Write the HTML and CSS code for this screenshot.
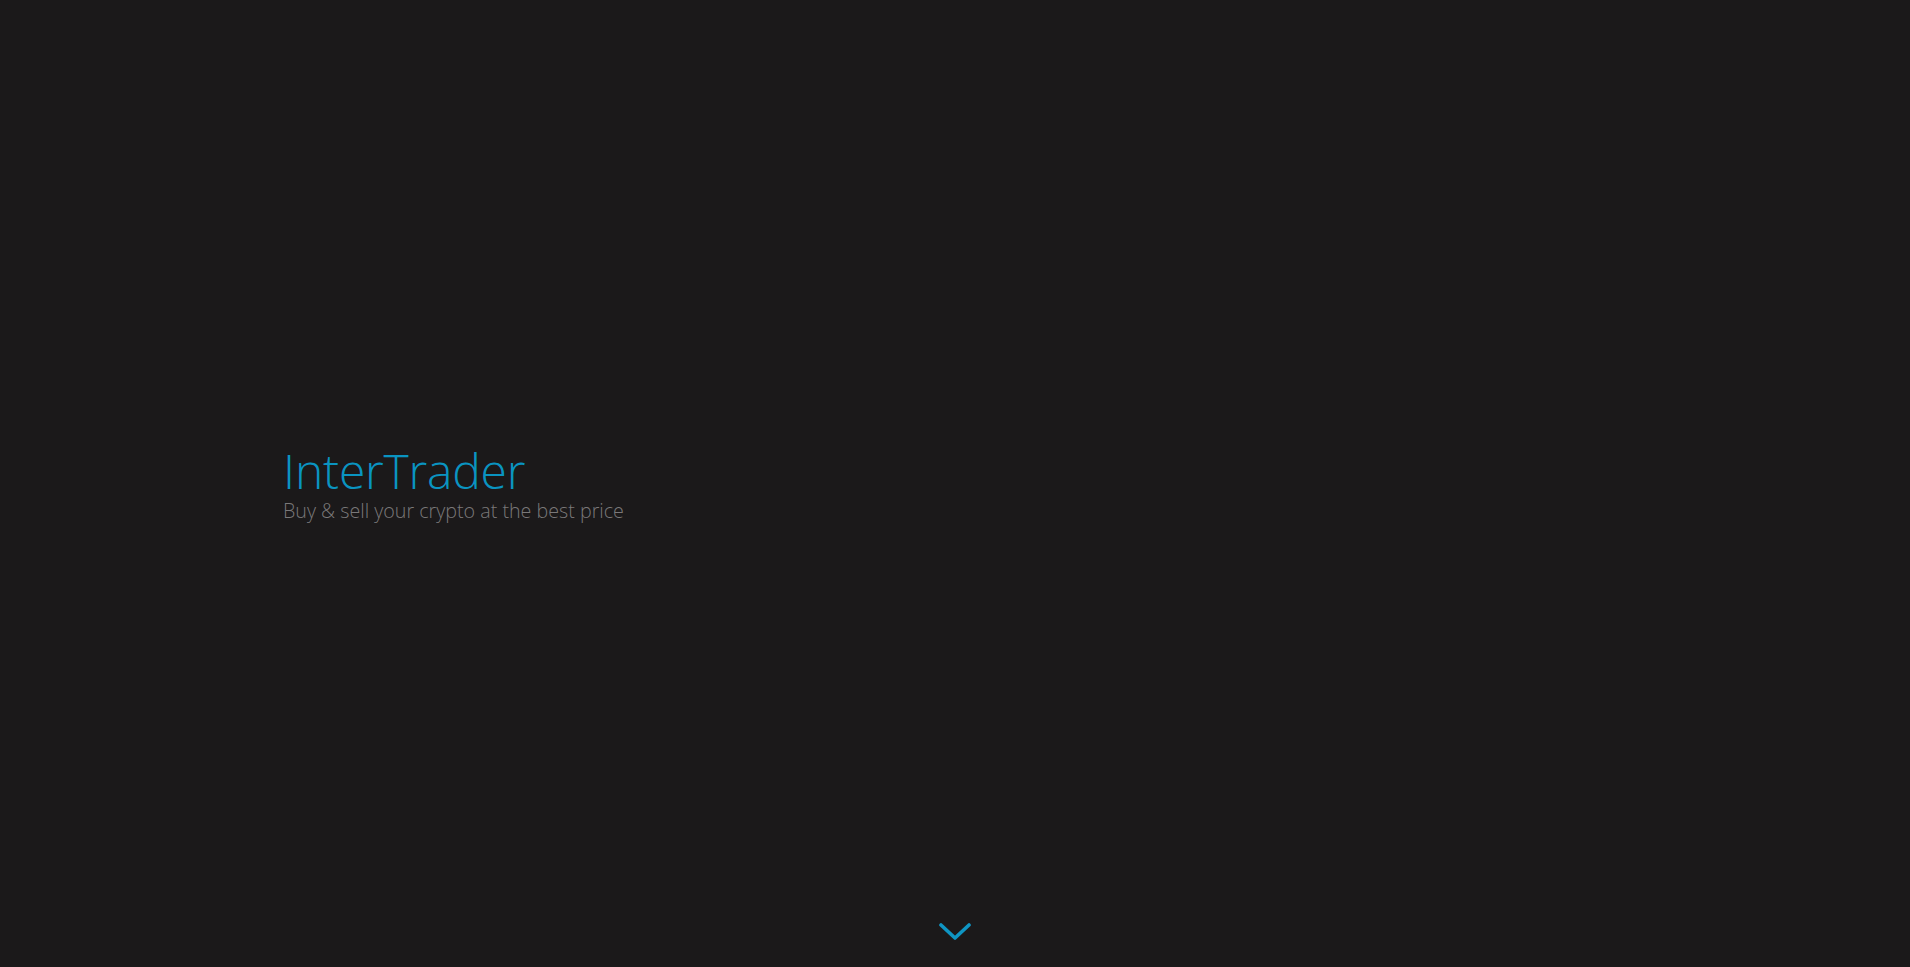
FILE: index.html
```html
<!DOCTYPE html>
<html lang="en">
<head>
<meta charset="utf-8">
<title>InterTrader</title>
<link rel="stylesheet" href="styles.css">
</head>
<body>
<main class="hero">
  <div class="container">
    <h1 class="title">InterTrader</h1>
    <p class="subtitle">Buy &amp; sell your crypto at the best price</p>
  </div>
  <a class="scroll-down" href="#" aria-label="Scroll down">
    <svg width="32" height="18" viewBox="0 0 32 18"><path d="M2 2 L16 15 L30 2" fill="none" stroke="#0f95c3" stroke-width="3.6" stroke-linecap="round" stroke-linejoin="round"/></svg>
  </a>
</main>
</body>
</html>
```
FILE: styles.css
```css
html, body {
  margin: 0;
  padding: 0;
  height: 100%;
}
body {
  background: #1b191a;
  font-family: "Open Sans", "Liberation Sans", sans-serif;
  font-weight: 300;
}
.hero {
  position: relative;
  height: 967px;
  display: flex;
  align-items: center;
}
.container {
  width: 1344px;
  margin: 0 auto;
}
.title {
  margin: 0;
  font-size: 48px;
  font-weight: 300;
  line-height: 54px;
  color: #0a94c1;
  letter-spacing: -0.2px;
}
.subtitle {
  margin: 0;
  font-size: 19.7px;
  line-height: 26px;
  color: #7a7879;
}
.scroll-down {
  position: absolute;
  left: 50%;
  bottom: 26px;
  transform: translateX(-50%);
  display: block;
  width: 32px;
  height: 18px;
}
.scroll-down svg {
  display: block;
}
```
